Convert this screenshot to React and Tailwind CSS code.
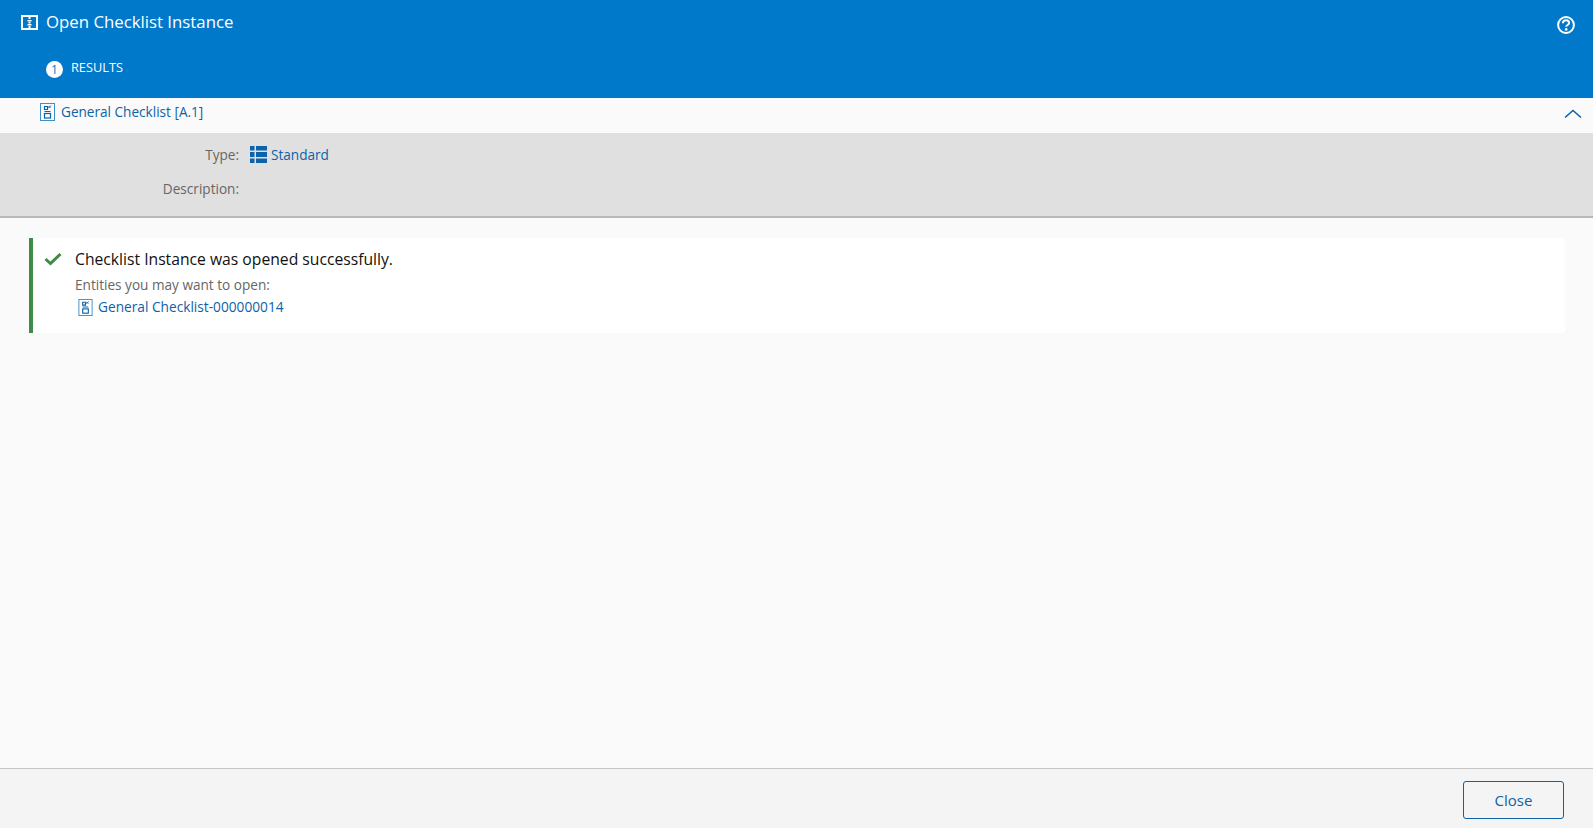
import React from 'react';

const ChecklistIcon = ({ className = "" }) => (
  <svg viewBox="0 0 15 18" className={className} fill="none" stroke="currentColor" strokeWidth="1">
    <rect x="0.5" y="0.5" width="14" height="17" stroke="#3f8fc9" />
    <path d="M4.5 3.5h3v3h-3zM4.5 8.5h6" strokeWidth="1.2" />
    <path d="M8.5 5l2.5-2.5M8.5 3l2 2" strokeWidth="1" />
    <rect x="4.5" y="10.5" width="6" height="4.5" strokeWidth="1.2" />
  </svg>
);

const InstanceIcon = () => (
  <svg viewBox="0 0 17 15" className="w-[17px] h-[15px] text-white">
    <path fill="none" stroke="currentColor" strokeWidth="2" d="M1 1h15v13H1z" />
    <path fill="currentColor" d="M7.5 2h2v2h-2zM6.5 5h4v1.5h-4zM7.5 7h2v1.5h-2zM6.5 9h4v1.5h-4zM7.5 11h2v2h-2z" />
  </svg>
);

const StandardIcon = () => (
  <svg viewBox="0 0 17 17" className="w-[17px] h-[17px] text-[#0d62a8]" fill="currentColor">
    <path d="M0 0h4.5v4.5H0zM6 0h11v4.5H6zM0 6h4.5v5H0zM6 6h11v5H6zM0 12.5h4.5V17H0zM6 12.5h11V17H6z" />
  </svg>
);

const App = () => {
  return (
    <div className="h-[828px] flex flex-col bg-[#fafafa] overflow-hidden font-['Open_Sans',sans-serif]">
      {/* Header */}
      <div className="h-[98px] shrink-0 bg-[#0079cb] text-white pl-[21px] pr-[18px]">
        <div className="flex items-center justify-between pt-[10px]">
          <div className="flex items-center gap-[8px]">
            <InstanceIcon />
            <span className="text-[16.8px] leading-[24px]">Open Checklist Instance</span>
          </div>
          <svg viewBox="0 0 18 18" className="w-[18px] h-[18px] mt-[5px]" fill="none">
            <circle cx="9" cy="9" r="7.9" stroke="currentColor" strokeWidth="2" />
            <path d="M5.9 7.2c0-1.9 1.3-2.9 3.1-2.9s3.1 1 3.1 2.6c0 2.1-2.9 2.1-2.9 3.9" stroke="currentColor" strokeWidth="2" />
            <circle cx="9.2" cy="13.4" r="1.3" fill="currentColor" />
          </svg>
        </div>
        <div className="flex items-start pl-[25px] pt-[24px]">
          <div className="w-[17px] h-[17px] mt-[3px] rounded-full bg-white text-[#0079cb] text-[12px] leading-[17px] text-center">1</div>
          <span className="ml-[8px] text-[12.75px] leading-[18px]">RESULTS</span>
        </div>
      </div>

      {/* Checklist row */}
      <div className="h-[35px] shrink-0 flex items-center justify-between pl-[40px] pr-[11px] pb-[8px] text-[#0d62a8]">
        <div className="flex items-center gap-[6px]">
          <ChecklistIcon className="w-[15px] h-[18px]" />
          <span className="text-[13.6px] leading-[20px]">General Checklist [A.1]</span>
        </div>
        <svg viewBox="0 0 18 9" className="w-[18px] h-[9px] mt-[4px] text-[#0d62a8]" fill="none" stroke="currentColor" strokeWidth="1.5">
          <path d="M1 8.5l8-7 8 7" />
        </svg>
      </div>

      {/* Details */}
      <div className="h-[85px] shrink-0 bg-[#e0e0e0] border-b-2 border-[#b8b8b8] pt-[10px]">
        <div className="flex items-center h-[24px]">
          <span className="w-[239px] text-right text-[13.6px] text-[#666666]">Type:</span>
          <div className="flex items-center ml-[11px] gap-[4px] text-[#0d62a8]">
            <StandardIcon />
            <span className="text-[13.6px]">Standard</span>
          </div>
        </div>
        <div className="flex items-center h-[24px] mt-[10px]">
          <span className="w-[239px] text-right text-[13.6px] text-[#666666]">Description:</span>
        </div>
      </div>

      {/* Message */}
      <div className="flex-1 pt-[20px] pl-[29px] pr-[28px]">
        <div className="h-[95px] bg-white border-l-[4px] border-[#3e8a46] flex rounded-r-[3px]">
          <svg viewBox="0 0 18 14" className="w-[18px] h-[14px] ml-[11px] mt-[14px] text-[#3e8a46]" fill="none" stroke="currentColor" strokeWidth="3">
            <path d="M1.5 7l5 4.5L16.5 2" />
          </svg>
          <div className="ml-[13px] pt-[9px]">
            <div className="text-[15.7px] leading-[24px] text-[#111111]">Checklist Instance was opened successfully.</div>
            <div className="text-[13.6px] leading-[20px] mt-[4px] text-[#666666]">Entities you may want to open:</div>
            <div className="flex items-center gap-[5px] mt-[2px] pl-[3px] text-[#0d62a8]">
              <ChecklistIcon className="w-[15px] h-[17px]" />
              <span className="text-[13.7px] leading-[20px]">General Checklist-000000014</span>
            </div>
          </div>
        </div>
      </div>

      {/* Footer */}
      <div className="h-[60px] shrink-0 bg-[#f4f4f4] border-t border-[#c4c4c4] flex justify-end items-start pt-[12px] pr-[29px]">
        <button className="w-[101px] h-[38px] rounded-[3px] border border-[#0d62a8] text-[#0d62a8] text-[15px]">Close</button>
      </div>
    </div>
  );
};

export default App;
